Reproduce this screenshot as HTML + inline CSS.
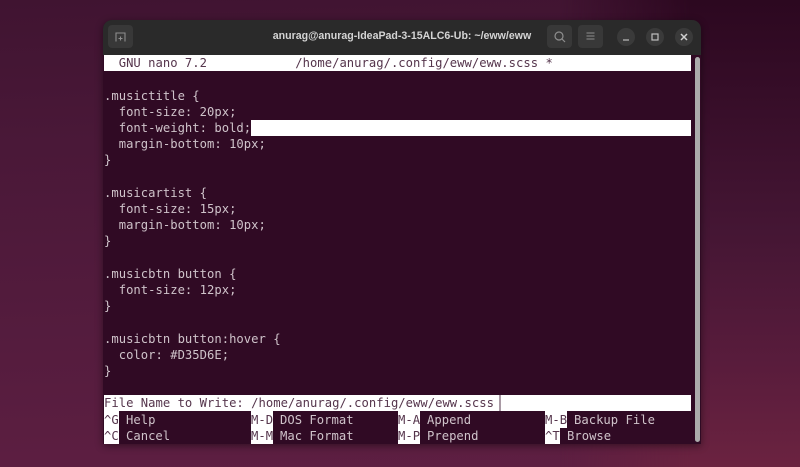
<!DOCTYPE html>
<html><head><meta charset="utf-8"><style>
html,body{margin:0;padding:0}
body{width:800px;height:467px;overflow:hidden;position:relative;background:linear-gradient(178deg,#401431 0%,#4a1838 30%,#551c3e 70%,#5e1f42 100%)}
.a{position:absolute}
#bg1{left:560px;top:0;width:240px;height:467px;background:linear-gradient(to bottom,#2c0820 0%,#360d28 20%,#451634 50%,#591c3c 78%,#6b2340 100%);-webkit-mask-image:linear-gradient(to right,transparent 0,#000 55%);mask-image:linear-gradient(to right,transparent 0,#000 55%)}
#win{left:103px;top:20px;width:598px;height:424px;background:#300a24;border-radius:9px 9px 0 0;box-shadow:0 2px 8px rgba(0,0,0,.45);overflow:hidden;filter:blur(.3px)}
#tb{left:0;top:0;width:598px;height:35px;background:#2a2a2a}
.btn{position:absolute;top:5px;width:25px;height:23px;background:#383838;border-radius:4px}
.cir{position:absolute;top:8px;width:18px;height:18px;background:#3a3a3a;border-radius:50%}
#title{left:0;top:9px;width:598px;text-align:center;font:bold 10.6px/15px "Liberation Sans",sans-serif;color:#d4d4d4;white-space:nowrap}
.l{position:absolute;left:1px;height:16.2px;font:12.2px/16.2px "DejaVu Sans Mono",monospace;letter-spacing:.02px;color:#cfc3ca;white-space:pre}
.w{position:absolute;background:#fff;height:16px}
.inv{color:#55354c}
#sb{left:592px;top:37px;width:4.5px;height:385px;background:#ababab;border-radius:3px}
</style></head><body>
<svg class="a" style="left:700px;top:0" width="100" height="40"><polygon points="70,0 100,0 100,28" fill="#3f1430"/></svg>
<div class="a" id="bg1"></div>
<div class="a" id="win">
<div class="a" id="tb"></div>
<div class="btn" style="left:5px"><svg width="25" height="23" fill="none" stroke="#8e8e8e" stroke-width="1.1"><path d="M8 16.5V8h9v8.5M10.5 13.5h4M12.5 11.5v4"/></svg></div>
<div class="a" id="title">anurag@anurag-IdeaPad-3-15ALC6-Ub: ~/eww/eww</div>
<div class="btn" style="left:444px"><svg width="25" height="23" fill="none" stroke="#8e8e8e" stroke-width="1.2"><circle cx="12" cy="11" r="4"/><path d="M15 14L18 17"/></svg></div>
<div class="btn" style="left:475px"><svg width="25" height="23" fill="none" stroke="#8e8e8e" stroke-width="1"><path d="M8.5 8h8M8.5 11h8M8.5 14h8"/></svg></div>
<div class="cir" style="left:514px"><svg class="a" width="18" height="18" fill="none" stroke="#b8b8b8" stroke-width="1.2"><path d="M6 12h6"/></svg></div>
<div class="cir" style="left:543px"><svg class="a" width="18" height="18" fill="none" stroke="#c0c0c0" stroke-width="1.2"><rect x="6" y="6" width="6" height="6"/></svg></div>
<div class="cir" style="left:572px"><svg class="a" width="18" height="18" fill="none" stroke="#d0d0d0" stroke-width="1.5"><path d="M6 6l6 6M12 6l-6 6"/></svg></div>

<div class="w" style="left:1px;top:35px;width:587px"></div>
<div class="l inv" style="top:35px">  GNU nano 7.2            /home/anurag/.config/eww/eww.scss *</div>
<div class="l" style="top:68px">.musictitle {</div>
<div class="l" style="top:84px">  font-size: 20px;</div>
<div class="w" style="left:148px;top:100px;width:440px"></div>
<div class="l" style="top:100px">  font-weight: bold;</div>
<div class="l" style="top:116px">  margin-bottom: 10px;</div>
<div class="l" style="top:132px">}</div>
<div class="l" style="top:165px">.musicartist {</div>
<div class="l" style="top:181px">  font-size: 15px;</div>
<div class="l" style="top:197px">  margin-bottom: 10px;</div>
<div class="l" style="top:213px">}</div>
<div class="l" style="top:246px">.musicbtn button {</div>
<div class="l" style="top:262px">  font-size: 12px;</div>
<div class="l" style="top:278px">}</div>
<div class="l" style="top:311px">.musicbtn button:hover {</div>
<div class="l" style="top:327px">  color: #D35D6E;</div>
<div class="l" style="top:343px">}</div>

<div class="w" style="left:1px;top:375px;width:587px"></div>
<div class="a" style="left:393px;top:375px;width:2px;height:16px;background:#fff"></div>
<div class="a" style="left:396px;top:375px;width:2px;height:16px;background:#a99aa5"></div>
<div class="l inv" style="top:375px">File Name to Write: /home/anurag/.config/eww/eww.scss</div>
<div class="w" style="left:1px;top:391px;width:15px;height:33px"></div>
<div class="w" style="left:148px;top:391px;width:22px;height:33px"></div>
<div class="w" style="left:295px;top:391px;width:22px;height:33px"></div>
<div class="w" style="left:442px;top:391px;width:22px;height:17px"></div>
<div class="w" style="left:442px;top:407px;width:15px;height:17px"></div>
<div class="l inv" style="top:392px">^G</div><div class="l" style="left:23px;top:392px">Help</div>
<div class="l inv" style="top:408px">^C</div><div class="l" style="left:23px;top:408px">Cancel</div>
<div class="l inv" style="left:148px;top:392px">M-D</div><div class="l" style="left:177px;top:392px">DOS Format</div>
<div class="l inv" style="left:148px;top:408px">M-M</div><div class="l" style="left:177px;top:408px">Mac Format</div>
<div class="l inv" style="left:295px;top:392px">M-A</div><div class="l" style="left:324px;top:392px">Append</div>
<div class="l inv" style="left:295px;top:408px">M-P</div><div class="l" style="left:324px;top:408px">Prepend</div>
<div class="l inv" style="left:442px;top:392px">M-B</div><div class="l" style="left:471px;top:392px">Backup File</div>
<div class="l inv" style="left:442px;top:408px">^T</div><div class="l" style="left:464px;top:408px">Browse</div>
<div class="a" id="sb"></div>
</div>
</body></html>
